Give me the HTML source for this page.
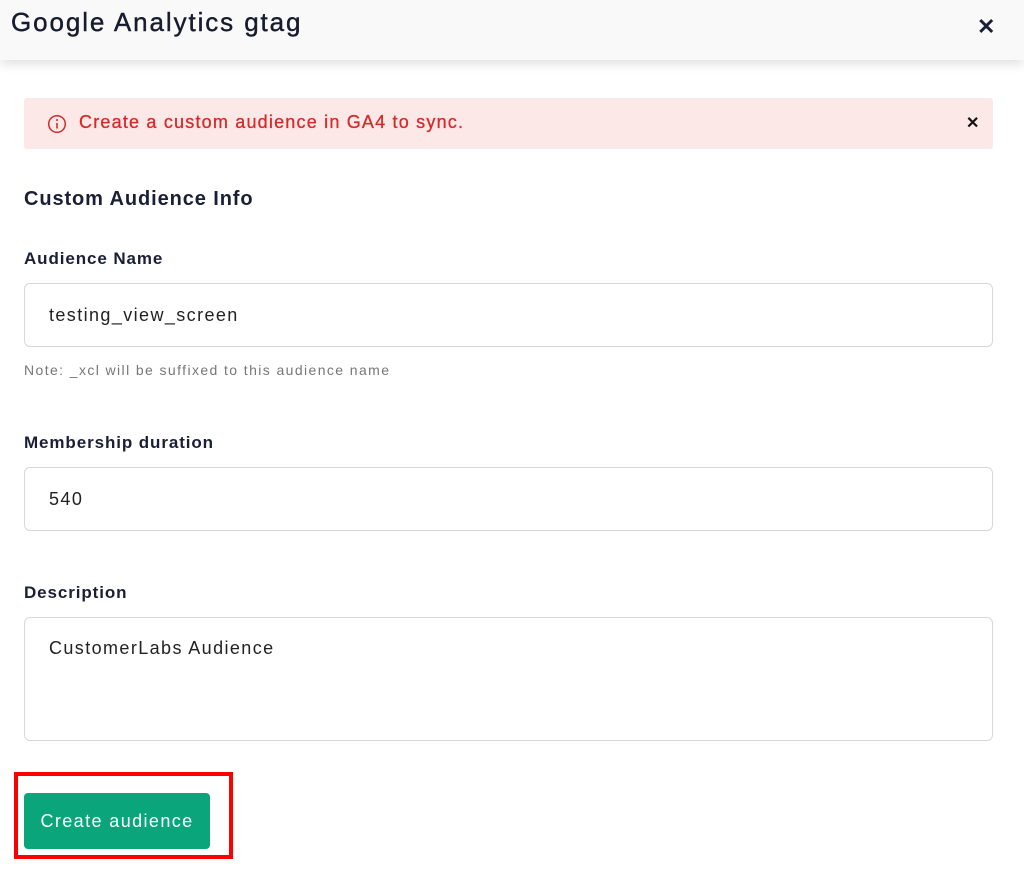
<!DOCTYPE html>
<html><head><style>
*{box-sizing:border-box;margin:0;padding:0}
body{width:1024px;height:886px;background:#fff;font-family:"Liberation Sans",sans-serif;color:#1a1f36;position:relative;overflow:hidden}
.hdr{position:absolute;left:0;top:0;width:1024px;height:60px;background:#f9f9f9;box-shadow:0 4px 10px rgba(0,0,0,.12)}
.hdr h1{position:absolute;left:11px;top:7px;font-size:26px;font-weight:normal;color:#161c2d;letter-spacing:1.9px;-webkit-text-stroke:.4px #161c2d}
.x{position:absolute;font-weight:bold}
.alert{position:absolute;left:24px;top:98px;width:969px;height:51px;background:#fce8e6;border-radius:3px}
.alert span{position:absolute;left:55px;top:14px;font-size:18px;color:#d42a2a;letter-spacing:1.2px;-webkit-text-stroke:.3px #d42a2a}
.lbl{position:absolute;left:24px;font-size:17px;color:#1a1f36;font-weight:bold;letter-spacing:.9px}
.inp{position:absolute;left:24px;width:969px;border:1px solid #d8d8d8;border-radius:6px;font-size:18px;padding-left:24px;color:#222;letter-spacing:1.4px}
.note{position:absolute;left:24px;top:362px;font-size:14px;color:#777;letter-spacing:1.4px}
.red{position:absolute;left:14px;top:772px;width:219px;height:87px;border:4px solid #f00}
.btn{position:absolute;left:24px;top:793px;width:186px;height:56px;background:#0aa57a;border-radius:4px;color:#fff;font-size:18px;text-align:center;line-height:56px;letter-spacing:1.4px}
</style></head><body>
<div class="hdr"><h1>Google Analytics gtag</h1><div class="x" style="left:977px;top:14px;font-size:22px">✕</div></div>
<div class="alert">
<svg style="position:absolute;left:23px;top:16px" width="20" height="20" viewBox="0 0 20 20"><circle cx="10" cy="10" r="8.3" fill="none" stroke="#d42a2a" stroke-width="1.5"/><line x1="10" y1="9" x2="10" y2="14.5" stroke="#d42a2a" stroke-width="1.6"/><circle cx="10" cy="6" r="1" fill="#d42a2a"/></svg>
<span>Create a custom audience in GA4 to sync.</span>
<div class="x" style="left:942px;top:15px;font-size:16px;color:#111">✕</div></div>
<div class="lbl" style="top:188px;font-size:20px">Custom Audience Info</div>
<div class="lbl" style="top:249px">Audience Name</div>
<div class="inp" style="top:283px;height:64px;line-height:62px">testing_view_screen</div>
<div class="note">Note: _xcl will be suffixed to this audience name</div>
<div class="lbl" style="top:433px">Membership duration</div>
<div class="inp" style="top:467px;height:64px;line-height:62px">540</div>
<div class="lbl" style="top:583px">Description</div>
<div class="inp" style="top:617px;height:124px;padding-top:20px">CustomerLabs Audience</div>
<div class="red"></div>
<div class="btn">Create audience</div>
</body></html>
